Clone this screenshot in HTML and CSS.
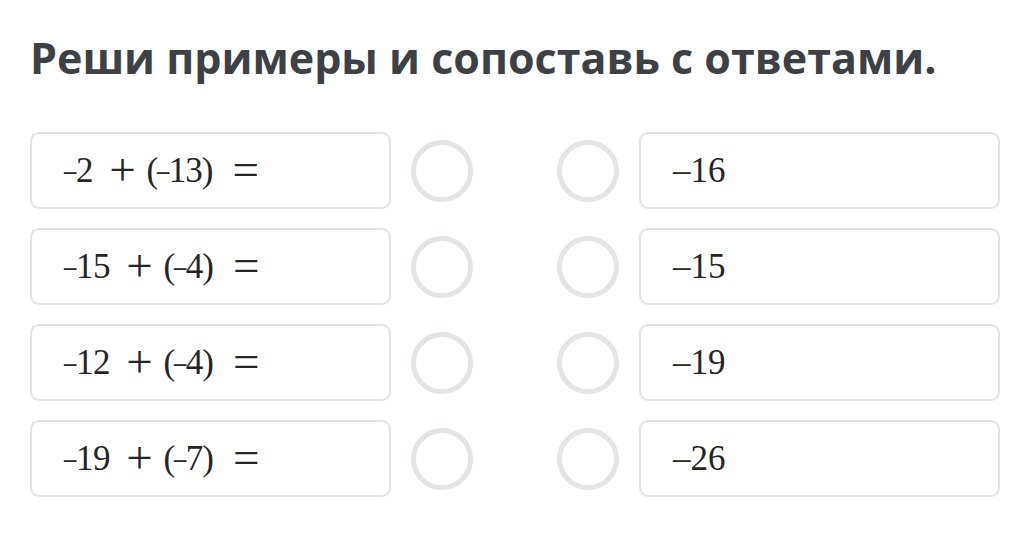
FILE: index.html
```html
<!DOCTYPE html>
<html lang="ru">
<head>
<meta charset="utf-8">
<link rel="stylesheet" href="styles.css">
</head>
<body>
<div class="page">
  <h1 class="title">Реши примеры и сопоставь с ответами.</h1>
  <div class="rows">
    <div class="row">
      <div class="card"><span class="expr"><span class="neg">–</span>2 <span class="op">+</span> <span class="grp">(<span class="neg">–</span>13)</span> <span class="eq">=</span></span></div>
      <div class="dot"></div>
      <div class="dot dot-right"></div>
      <div class="card">–16</div>
    </div>
    <div class="row">
      <div class="card"><span class="expr"><span class="neg">–</span>15 <span class="op">+</span> <span class="grp">(<span class="neg">–</span>4)</span> <span class="eq">=</span></span></div>
      <div class="dot"></div>
      <div class="dot dot-right"></div>
      <div class="card">–15</div>
    </div>
    <div class="row">
      <div class="card"><span class="expr"><span class="neg">–</span>12 <span class="op">+</span> <span class="grp">(<span class="neg">–</span>4)</span> <span class="eq">=</span></span></div>
      <div class="dot"></div>
      <div class="dot dot-right"></div>
      <div class="card">–19</div>
    </div>
    <div class="row">
      <div class="card"><span class="expr"><span class="neg">–</span>19 <span class="op">+</span> <span class="grp">(<span class="neg">–</span>7)</span> <span class="eq">=</span></span></div>
      <div class="dot"></div>
      <div class="dot dot-right"></div>
      <div class="card">–26</div>
    </div>
  </div>
</div>
</body>
</html>
```
FILE: styles.css
```css
html, body {
  margin: 0;
  padding: 0;
  background: #ffffff;
}
.page {
  padding: 28px 0 0 30px;
}
.title {
  margin: 0;
  font-family: "Open Sans", sans-serif;
  font-weight: 700;
  font-size: 43px;
  line-height: 60px;
  color: #3d4045;
}
.rows {
  margin-top: 44px;
  display: flex;
  flex-direction: column;
  gap: 19px;
}
.row {
  display: flex;
  align-items: center;
}
.card {
  box-sizing: border-box;
  width: 361px;
  height: 77px;
  border: 2px solid #e2e3e5;
  border-radius: 9px;
  padding-left: 32px;
  display: flex;
  align-items: center;
  white-space: pre;
  font-family: "Liberation Serif", "Times New Roman", serif;
  font-size: 35px;
  line-height: 40px;
  color: #252525;
}
.expr {
  letter-spacing: -0.5px;
}
.grp {
  letter-spacing: -1px;
}
.neg {
  display: inline-block;
  transform: scaleX(0.7);
  transform-origin: left center;
  margin-right: -5px;
}
.op, .eq {
  font-size: 47px;
  line-height: 0;
  position: relative;
  top: 3px;
}
.op {
  margin: 0 3px 0 8px;
}
.eq {
  margin-left: 12px;
}
.dot {
  box-sizing: border-box;
  width: 62px;
  height: 62px;
  border: 5px solid #e3e4e6;
  border-radius: 50%;
  margin-left: 20px;
}
.dot-right {
  margin-left: 84px;
  margin-right: 20px;
}
```
